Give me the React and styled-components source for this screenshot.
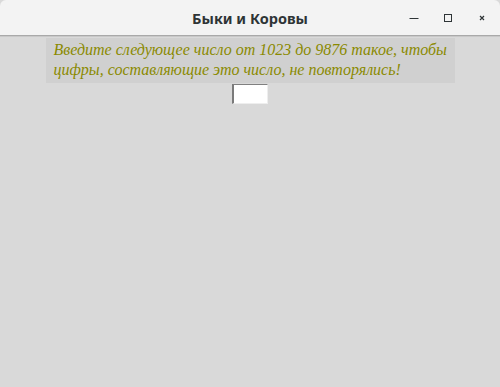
import React from "react";
import styled, { createGlobalStyle } from "styled-components";

const Global = createGlobalStyle`
  html, body { margin: 0; padding: 0; background: #d9d9d9; }
  body { width: 500px; height: 387px; overflow: hidden; }
`;

const Window = styled.div`
  width: 500px;
  height: 387px;
  display: flex;
  flex-direction: column;
  background: #d9d9d9;
`;

const TitleBar = styled.div`
  height: 35px;
  flex: none;
  display: grid;
  grid-template-columns: 1fr auto 1fr;
  align-items: center;
  background: #f3f3f3;
  border-radius: 6px 6px 0 0;
  border-bottom: 1px solid #a9a9a9;
  box-shadow: 0 1px 0 #c8c8c8;
  h1 {
    grid-column: 2;
    margin: 0;
    font-family: "Noto Sans", "DejaVu Sans", sans-serif;
    font-weight: 700;
    font-size: 14.5px;
    color: #2e3436;
  }
`;

const Controls = styled.div`
  grid-column: 3;
  justify-self: end;
  display: flex;
  align-items: center;
  padding-right: 1px;
`;

const CtlBtn = styled.div`
  width: 34px;
  height: 24px;
  display: flex;
  align-items: center;
  justify-content: center;
  svg { display: block; }
`;

const Body = styled.div`
  display: flex;
  flex-direction: column;
  align-items: center;
  padding-top: 2px;
`;

const Prompt = styled.div`
  width: 401px;
  padding: 2px 0 3px 8px;
  background: #d0d0d0;
  font-family: "Liberation Serif", serif;
  font-style: italic;
  font-size: 16px;
  line-height: 20px;
  color: #8a8a00;
`;

const Field = styled.input`
  width: 36px;
  height: 20px;
  box-sizing: border-box;
  margin-top: 1px;
  background: #fff;
  border-style: solid;
  border-width: 1px 1px 1px 2px;
  border-color: #808080 #eeeeee #eeeeee #7a7a7a;
  padding: 0;
  outline: none;
`;

export default function App() {
  return (
    <>
      <Global />
      <Window>
        <TitleBar>
          <h1>Быки и Коровы</h1>
          <Controls>
            <CtlBtn>
              <svg width="12" height="12" viewBox="0 0 12 12">
                <rect x="1.5" y="6" width="9" height="1" fill="#2e3436" />
              </svg>
            </CtlBtn>
            <CtlBtn>
              <svg width="12" height="12" viewBox="0 0 12 12">
                <rect x="2.5" y="2.5" width="7" height="7" fill="none" stroke="#2e3436" strokeWidth="1" />
              </svg>
            </CtlBtn>
            <CtlBtn>
              <svg width="12" height="12" viewBox="0 0 12 12">
                <path d="M4 4 L8 8 M8 4 L4 8" stroke="#2e3436" strokeWidth="1.2" />
              </svg>
            </CtlBtn>
          </Controls>
        </TitleBar>
        <Body>
          <Prompt>
            Введите следующее число от 1023 до 9876 такое, чтобы
            <br />
            цифры, составляющие это число, не повторялись!
          </Prompt>
          <Field />
        </Body>
      </Window>
    </>
  );
}
